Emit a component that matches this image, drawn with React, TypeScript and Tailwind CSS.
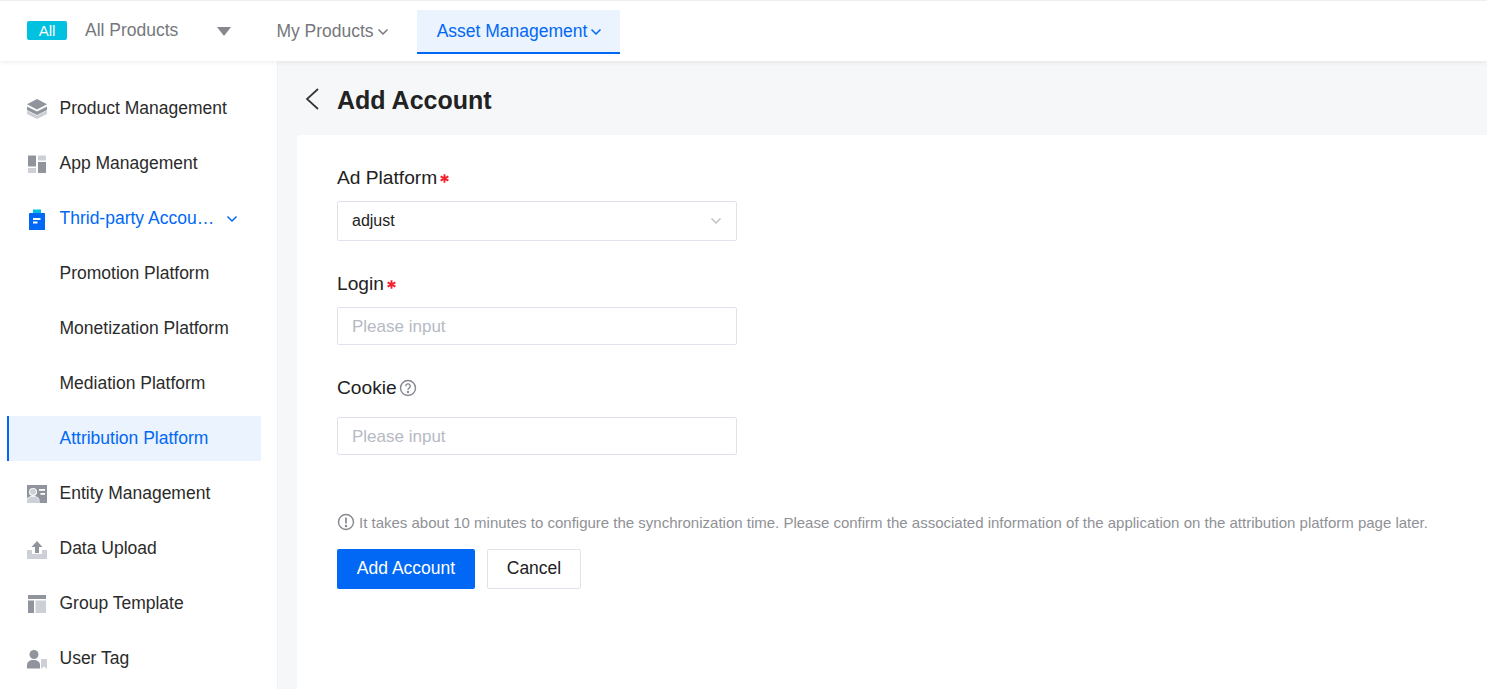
import React from "react";

const F = "font-['Liberation_Sans',sans-serif]";

type IconName = "layers" | "apps" | "clip" | "entity" | "upload" | "template" | "tag";

function MenuIcon({ name }: { name: IconName }) {
  const d = "#90949c";
  const l = "#cdd0d6";
  return (
    <svg width="22" height="22" viewBox="0 0 22 22" className="shrink-0">
      {name === "layers" && (
        <>
          <path d="M11 17.500 1 12.500v3.500L11 21l10-5v-3.500z" fill={l} />
          <path d="M11 13.400 1 8.600v3.400l10 5 10-5V8.600z" fill={d} />
          <path d="M11 1 1 6.200l10 5.200 10-5.200z" fill={d} />
        </>
      )}
      {name === "apps" && (
        <>
          <rect x="2" y="2.500" width="8" height="11" fill={d} />
          <rect x="2" y="15" width="8" height="5" fill={l} />
          <rect x="12" y="2.500" width="8" height="5" fill={l} />
          <rect x="12" y="9" width="8" height="11" fill={d} />
        </>
      )}
      {name === "clip" && (
        <>
          <rect x="3" y="5" width="16" height="17" rx="0.500" fill="#0068f5" />
          <rect x="7" y="1.500" width="8" height="3.500" fill="#00c2e0" />
          <rect x="7" y="10" width="7.500" height="2" fill="#fff" />
          <rect x="7" y="13.500" width="4.500" height="2" fill="#fff" />
        </>
      )}
      {name === "entity" && (
        <>
          <path d="M1 2h20v18H1z" fill={d} />
          <circle cx="7" cy="9" r="4" fill="#fff" />
          <path d="M0.500 20.500v-3c0-2.500 2.800-4.500 6.500-4.500s6.500 2 6.500 4.500v3z" fill="#fff" />
          <path d="M1 20v-2.500c0-2.200 2.500-3.800 6-3.800s6 1.600 6 3.800V20z" fill={l} />
          <circle cx="7" cy="8.800" r="3" fill={l} />
          <rect x="13" y="6" width="6" height="1.800" fill="#fff" />
          <rect x="14.500" y="10" width="4.500" height="1.800" fill="#fff" />
        </>
      )}
      {name === "upload" && (
        <>
          <path d="M1 12h5v4h10v-4h5v9H1z" fill={l} />
          <path d="M11 3 5.500 9H9v6h4V9h3.500z" fill={d} />
        </>
      )}
      {name === "template" && (
        <>
          <rect x="2" y="2" width="18" height="4" fill={d} />
          <rect x="2" y="7.500" width="6" height="12.500" fill={d} />
          <rect x="9.500" y="7.500" width="10.500" height="12.500" fill={l} />
        </>
      )}
      {name === "tag" && (
        <>
          <circle cx="8" cy="6.500" r="4.500" fill={d} />
          <path d="M1 20.500v-3.500c0-3 2.500-5 6.500-5s6.500 2 6.500 5v3.500z" fill={d} />
          <path d="M15 11h6v10l-3-2.500-3 2.500z" fill={l} />
        </>
      )}
    </svg>
  );
}

const Chevron = ({ cls = "" }: { cls?: string }) => (
  <svg width="12" height="8" viewBox="0 0 12 8" className={cls} fill="none" stroke="currentColor" strokeWidth="1.500">
    <path d="M1.500 1.500 6 6l4.500-4.500" />
  </svg>
);

function Item({ icon, label }: { icon?: IconName; label: string }) {
  return (
    <div className="mb-[10px] flex h-[45px] items-center pl-[26px] text-[17.500px] text-[#2b2b2b]">
      <span className="w-[33.500px] shrink-0">{icon && <MenuIcon name={icon} />}</span>
      <span>{label}</span>
    </div>
  );
}

function Label({ children }: { children: React.ReactNode }) {
  return <div className="flex h-[24px] items-center text-[19.200px] text-[#222]">{children}</div>;
}

const Star = () => (
  <svg width="9" height="9" viewBox="0 0 9 9" className="ml-[3px] mt-[1px]" stroke="#f5222d" strokeWidth="1.900">
    <path d="M4.500.300v8.400M.6 2.300l7.800 4.400M8.400 2.300.6 6.700" />
  </svg>
);

function Input() {
  return (
    <div className="flex h-[38px] w-[400px] items-center rounded-[2px] border border-[#e1e3ec] pl-[14px] pt-[2px] text-[17px] text-[#b6bac4]">
      Please input
    </div>
  );
}

export default function App() {
  return (
    <div className={`${F} flex h-[689px] w-[1487px] flex-col overflow-hidden bg-white`}>
      <header className="relative z-10 flex h-[61px] shrink-0 items-start border-t border-[#eceef2] bg-white shadow-[0_1px_5px_rgba(0,0,0,0.08)]">
        <span className="ml-[27px] mt-[20px] flex h-[19px] w-[40px] items-center justify-center rounded-[2px] bg-[#00c2e0] pt-[2px] text-[15px] text-white">
          All
        </span>
        <span className="ml-[18px] mt-[16px] text-[17.500px] text-[#75777c]">All Products</span>
        <span className="ml-[39px] mt-[26px] h-0 w-0 border-x-[7px] border-t-[9px] border-x-transparent border-t-[#85888e]" />
        <span className="ml-[45px] mt-[17px] flex items-center gap-[3px] text-[17.500px] text-[#75777c]">
          My Products <Chevron cls="mt-[2px]" />
        </span>
        <div className="ml-[28px] mt-[9px] flex h-[44px] w-[203px] items-center gap-[3px] border-b-2 border-[#0068f5] bg-[#ebf3fe] pl-[20px] text-[17.500px] text-[#0068f5]">
          Asset Management <Chevron cls="mt-[2px]" />
        </div>
      </header>
      <div className="flex min-h-0 flex-1">
        <aside className="w-[278px] shrink-0 border-r border-[#f0f1f4] pt-[25px]">
          <Item icon="layers" label="Product Management" />
          <Item icon="apps" label="App Management" />
          <div className="mb-[10px] flex h-[45px] items-center pl-[26px] text-[17.500px] text-[#0068f5]">
            <span className="w-[33.500px] shrink-0">
              <MenuIcon name="clip" />
            </span>
            <span className="w-[157px] truncate">Thrid-party Accounts</span>
            <Chevron cls="ml-[9px]" />
          </div>
          <Item label="Promotion Platform" />
          <Item label="Monetization Platform" />
          <Item label="Mediation Platform" />
          <div className="mb-[10px] ml-[7px] mr-[16px] flex h-[45px] items-center border-l-2 border-[#0068f5] bg-[#ebf3fe] pl-[50.500px] text-[17.500px] text-[#0068f5]">
            Attribution Platform
          </div>
          <Item icon="entity" label="Entity Management" />
          <Item icon="upload" label="Data Upload" />
          <Item icon="template" label="Group Template" />
          <Item icon="tag" label="User Tag" />
        </aside>
        <main className="flex min-w-0 flex-1 flex-col bg-[#f6f7f9] pl-[19px]">
          <div className="flex h-[74px] shrink-0 items-center gap-[17px] pl-[7px] pt-[5px]">
            <svg width="16" height="24" viewBox="0 0 16 24" fill="none" stroke="#333" strokeWidth="1.700" className="-mt-[3px]">
              <path d="M14 2 3 12l11 10" />
            </svg>
            <h1 className="text-[25px] font-bold text-[#222]">Add Account</h1>
          </div>
          <div className="flex-1 rounded-tl-[4px] bg-white pl-[40px] pt-[31px]">
            <Label>
              Ad Platform <Star />
            </Label>
            <div className="mt-[11px] flex h-[40px] w-[400px] items-center justify-between rounded-[2px] border border-[#e1e3ec] px-[14px] text-[16px] text-[#222]">
              adjust
              <Chevron cls="text-[#bfc1c6]" />
            </div>
            <div className="mt-[31px]">
              <Label>
                Login <Star />
              </Label>
            </div>
            <div className="mt-[11px]">
              <Input />
            </div>
            <div className="mt-[31px]">
              <Label>
                Cookie
                <svg width="18" height="18" viewBox="0 0 18 18" className="ml-[2px]" fill="none" stroke="#85888e" strokeWidth="1.400">
                  <circle cx="9" cy="9" r="7.500" />
                  <path d="M6.700 7.200a2.300 2.300 0 1 1 3.400 2c-.8.400-1.100.8-1.100 1.600" />
                  <circle cx="9" cy="13" r=".5" fill="#85888e" />
                </svg>
              </Label>
            </div>
            <div className="mt-[17px]">
              <Input />
            </div>
            <div className="mt-[57px] flex items-center gap-[4px] text-[15px] text-[#8f9196]">
              <svg width="18" height="18" viewBox="0 0 18 18" fill="none" stroke="#85888e" strokeWidth="1.400" className="-mt-[3px]">
                <circle cx="9" cy="9" r="7.500" />
                <path d="M9 4.500v6" strokeWidth="1.700" />
                <circle cx="9" cy="13" r=".6" fill="#85888e" />
              </svg>
              It takes about 10 minutes to configure the synchronization time. Please confirm the associated information of the application on the attribution platform page later.
            </div>
            <div className="mt-[14px] flex gap-[12px]">
              <button className="h-[40px] w-[138px] rounded-[2px] bg-[#0068f5] pb-[1px] text-[17.500px] text-white">Add Account</button>
              <button className="h-[40px] w-[94px] rounded-[2px] border border-[#e1e3ec] bg-white pb-[1px] text-[17.500px] text-[#222]">Cancel</button>
            </div>
          </div>
        </main>
      </div>
    </div>
  );
}
